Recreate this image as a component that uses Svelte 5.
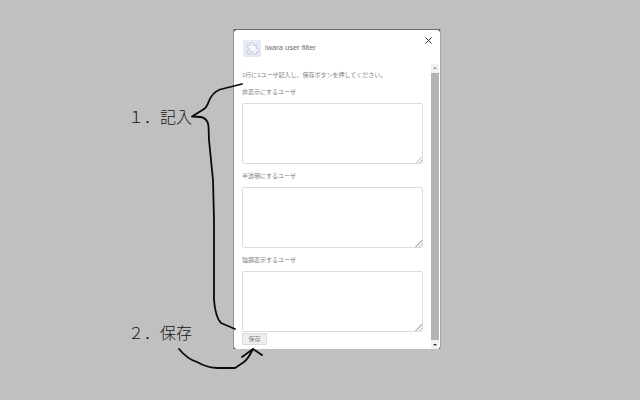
<script>
  const fields = ['非表示にするユーザ', '半透明にするユーザ', '強調表示するユーザ'];
</script>

<div class="desktop">
  <div class="note first">１．記入</div>
  <div class="note second">２．保存</div>

  <div class="popup">
    <div class="sheet">
      <header>
        <div class="logo">
          <svg width="14" height="14" viewBox="0 0 14 14">
            <path d="M2 4.5h3V3.4a1.7 1.7 0 0 1 3.4 0v1.1h3v3h1a1.6 1.6 0 0 1 0 3.2h-1V13H8.4v-1a1.7 1.7 0 0 0-3.4 0v1H2v-3h1a1.6 1.6 0 0 0 0-3.2H2z" fill="#f6f7f9" stroke="#bcc0c8" stroke-width="0.8" />
          </svg>
        </div>
        <span class="title">iwara user filter</span>
        <svg class="close" width="7" height="7" viewBox="0 0 7 7">
          <path d="M0.5 0.5l6 6M6.5 0.5l-6 6" stroke="#333" stroke-width="1" fill="none" />
        </svg>
      </header>

      <div class="body">
        <div class="content">
          <p class="hint">1行に1ユーザ記入し、保存ボタンを押してください。</p>
          {#each fields as label}
            <label>
              <span>{label}</span>
              <textarea></textarea>
            </label>
          {/each}
          <button>保存</button>
        </div>
        <div class="scrollbar">
          <div class="arrow up"></div>
          <div class="thumb"></div>
          <div class="arrow down"></div>
        </div>
      </div>
    </div>
  </div>

  <svg class="scribble" width="640" height="400" viewBox="0 0 640 400">
    <path d="M242 84 L230 87 L220 89.5 C214 92 211 96 209 101 C207 107 205 109 200 111.5 L192 116.5 L201 117 C206 118 208 121 208.5 126 L209 140 L211 160 L213 180 L214 220 L214 300 C215 312 218 320 221 323 L235 329" />
    <path d="M179 349 C184 355 190 360 197 362 C204 366 210 368 218 368 L235 368 L244 362 C248 359 250 355 253 349" />
    <path d="M242 357 L253 349 L262 355" />
  </svg>
</div>

<style>
  :global(body) {
    margin: 0;
    background: #c0c0c0;
  }

  .desktop {
    position: relative;
    box-sizing: border-box;
    width: 640px;
    height: 400px;
    padding: 29px 0 0 234px;
    background: #c0c0c0;
    overflow: hidden;
    font-family: "Liberation Sans", "Noto Sans CJK JP", sans-serif;
  }

  .note {
    position: absolute;
    left: 128px;
    font-size: 16px;
    line-height: 20px;
    color: #14141c;
    font-family: "Noto Sans CJK JP", sans-serif;
    font-weight: 300;
  }

  .first {
    top: 106px;
  }

  .second {
    top: 322px;
  }

  .popup {
    width: 206px;
    height: 320px;
    background: #444;
    box-sizing: border-box;
    border-top: 1px solid #6a6a6a;
    box-shadow: -1px 0 0 #929292, 1px 0 0 #a4a4a4;
  }

  .sheet {
    height: 100%;
    background: #fff;
    border-radius: 3px;
    display: flex;
    flex-direction: column;
  }

  header {
    display: flex;
    align-items: center;
    position: relative;
    height: 34px;
    padding-left: 9px;
    gap: 4px;
    flex-shrink: 0;
  }

  .logo {
    width: 18px;
    height: 17px;
    margin-top: 2px;
    background: #e4ebf6;
    border-radius: 1px;
    display: flex;
    align-items: center;
    justify-content: center;
  }

  .title {
    margin-top: 1px;
    font-size: 7.5px;
    color: #6e6e6e;
  }

  .close {
    position: absolute;
    right: 8px;
    top: 7px;
  }

  .body {
    flex: 1;
    display: flex;
    min-height: 0;
  }

  .content {
    flex: 1;
    padding: 6px 8px 0 8px;
    display: flex;
    flex-direction: column;
  }

  .hint {
    margin: 0 0 6px;
    font-size: 6px;
    line-height: 11px;
    color: #808080;
  }

  label {
    display: flex;
    flex-direction: column;
  }

  label span {
    font-size: 6px;
    line-height: 11px;
    height: 16px;
    color: #808080;
  }

  textarea {
    box-sizing: border-box;
    width: 181px;
    height: 61px;
    margin: 0 0 7px;
    padding: 0;
    border: 1px solid #dcdcdc;
    border-radius: 2px;
    background: #fff;
    display: block;
  }

  textarea::-webkit-resizer {
    background: linear-gradient(135deg, transparent 50%, #bbb 50%, #bbb 60%, transparent 60%, transparent 75%, #bbb 75%, #bbb 85%, transparent 85%) right bottom / 7px 7px no-repeat;
  }

  label:last-of-type textarea {
    margin-bottom: 1px;
  }

  button {
    width: 25px;
    height: 12px;
    padding: 0;
    font-size: 6px;
    line-height: 10px;
    color: #808080;
    background: #eee;
    border: 1px solid #dadada;
    border-radius: 1px;
    font-family: inherit;
  }

  .scrollbar {
    width: 8px;
    margin-right: 1px;
    display: flex;
    flex-direction: column;
    flex-shrink: 0;
    background: #f1f1f1;
  }

  .thumb {
    flex: 1;
    background: #b4b4b4;
  }

  .arrow {
    height: 9px;
    flex-shrink: 0;
    position: relative;
  }

  .arrow::after {
    content: '';
    position: absolute;
    left: 2px;
    width: 0;
    height: 0;
    border-left: 2px solid transparent;
    border-right: 2px solid transparent;
  }

  .up::after {
    top: 3px;
    border-bottom: 2px solid #999;
  }

  .down::after {
    top: 4px;
    border-top: 2px solid #333;
  }

  .scribble {
    position: absolute;
    left: 0;
    top: 0;
    pointer-events: none;
  }

  .scribble path {
    fill: none;
    stroke: #0a0a0a;
    stroke-width: 1.8;
    stroke-linejoin: round;
    stroke-linecap: round;
  }
</style>
